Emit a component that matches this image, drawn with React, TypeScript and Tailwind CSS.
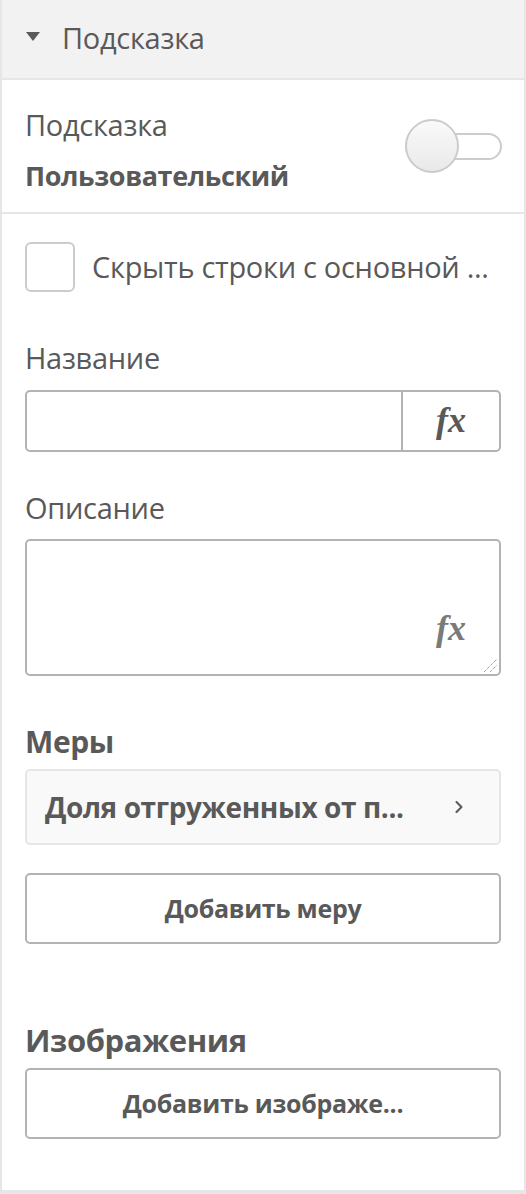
import { ChevronRight } from "lucide-react";

const FONT = { fontFamily: "'Open Sans', 'Noto Sans', sans-serif" };

function Fx({ className = "" }: { className?: string }) {
  return (
    <span
      className={`font-bold italic leading-none ${className}`}
      style={{ fontFamily: "'Liberation Serif', 'DejaVu Serif', serif" }}
    >
      fx
    </span>
  );
}

export default function App() {
  return (
    <div className="w-[526px] h-[1194px] bg-white text-[#595959]" style={FONT}>
      <div className="h-full border-x-2 border-b-4 border-[#e6e6e6] flex flex-col">
        {/* Header */}
        <div className="h-[80px] bg-[#f2f2f2] border-b-2 border-[#e6e6e6] flex items-center pl-[22px] gap-[20px]">
          <svg width="18" height="12" viewBox="0 0 18 12" className="mt-[-4px]">
            <polygon points="2,1 16,1 9,10" fill="#595959" />
          </svg>
          <span className="text-[29px] tracking-[-0.3px] mt-[-3px]">Подсказка</span>
        </div>

        {/* Toggle section */}
        <div className="h-[134px] border-b-2 border-[#e6e6e6] flex items-center justify-between pl-[23px] pr-[22px]">
          <div className="flex flex-col gap-[17px] pt-[8px]">
            <span className="text-[29px] leading-[34px] tracking-[-0.3px]">Подсказка</span>
            <span className="text-[27px] leading-[34px] font-bold tracking-[-0.4px]">Пользовательский</span>
          </div>
          <div className="relative w-[97px] h-[54px] flex items-center">
            <div className="w-[97px] h-[27px] rounded-full border-2 border-[#cccccc] bg-white" />
            <div className="absolute left-0 top-0 w-[54px] h-[54px] rounded-full border-2 border-[#cccccc] bg-gradient-to-b from-[#fafafa] to-[#e9e9e9]" />
          </div>
        </div>

        <div className="flex flex-col px-[23px]">
          {/* Checkbox */}
          <div className="flex items-center gap-[17px] mt-[28px] h-[50px]">
            <div className="w-[50px] h-[50px] rounded-[6px] border-2 border-[#cccccc] shrink-0" />
            <span className="text-[29px] tracking-[-0.3px] whitespace-nowrap overflow-hidden">Скрыть строки с основной ...</span>
          </div>

          {/* Название */}
          <span className="mt-[49px] text-[29px] leading-[34px] tracking-[-0.3px]">Название</span>
          <div className="mt-[15px] h-[62px] rounded-[5px] border-2 border-[#b3b3b3] flex">
            <div className="flex-1" />
            <div className="w-[98px] border-l-2 border-[#b3b3b3] flex items-center justify-center">
              <Fx className="text-[36px] text-[#595959] mt-[-2px]" />
            </div>
          </div>

          {/* Описание */}
          <span className="mt-[39px] text-[29px] leading-[34px] tracking-[-0.3px]">Описание</span>
          <div className="mt-[14px] h-[137px] rounded-[5px] border-2 border-[#b3b3b3] relative">
            <Fx className="absolute right-[33px] bottom-[28px] text-[36px] text-[#7a7a7a]" />
            <svg width="16" height="16" viewBox="0 0 16 16" className="absolute right-[1px] bottom-[1px]">
              <line x1="2" y1="15" x2="15" y2="2" stroke="#555" strokeWidth="0.8" strokeDasharray="1 1" />
              <line x1="8" y1="15" x2="15" y2="8" stroke="#555" strokeWidth="0.8" strokeDasharray="1 1" />
            </svg>
          </div>

          {/* Меры */}
          <span className="mt-[48px] text-[30px] leading-[36px] font-bold tracking-[-0.4px]">Меры</span>
          <div className="mt-[9px] h-[76px] rounded-[5px] border-2 border-[#e6e6e6] bg-[#f9f9f9] flex items-center justify-between pl-[18px] pr-[30px]">
            <span className="text-[28px] font-bold tracking-[-0.4px] whitespace-nowrap">Доля отгруженных от п...</span>
            <ChevronRight size={20} strokeWidth={2.5} className="text-[#595959] shrink-0" />
          </div>

          <button className="mt-[28px] h-[71px] rounded-[5px] border-2 border-[#b3b3b3] bg-white text-[25px] font-bold tracking-[-0.3px] text-[#595959]">
            Добавить меру
          </button>

          {/* Изображения */}
          <span className="mt-[78px] text-[31px] leading-[36px] font-bold tracking-[-0.4px]">Изображения</span>
          <button className="mt-[10px] h-[71px] rounded-[5px] border-2 border-[#b3b3b3] bg-white text-[25px] font-bold tracking-[-0.3px] text-[#595959]">
            Добавить изображе...
          </button>
        </div>
      </div>
    </div>
  );
}
